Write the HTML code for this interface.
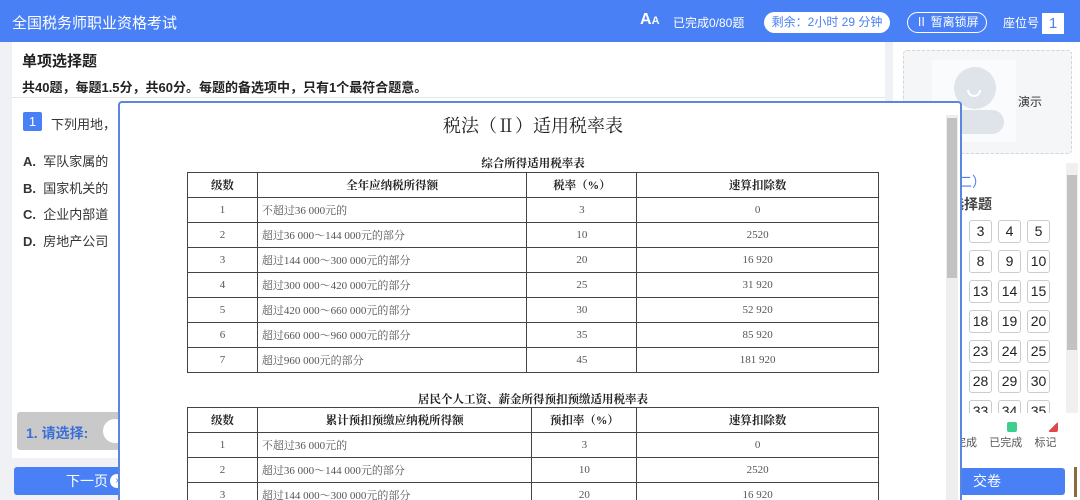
<!DOCTYPE html>
<html style="overflow:hidden;width:1080px;height:500px"><head><meta charset="utf-8">
<style>
*{margin:0;padding:0;box-sizing:border-box}
body{width:1080px;height:500px;overflow:hidden;background:#f0f1f4;font-family:"Liberation Sans","Noto Sans CJK SC",sans-serif;position:relative;color:#333}
.a{position:absolute}
.hdr{left:0;top:0;width:1080px;height:42px;background:#4a80f5;color:#fff}
table{border-collapse:collapse;position:absolute;font-family:"Liberation Serif","Noto Serif CJK SC",serif;font-size:11px;color:#555}
td{border:1px solid #444;height:25px;text-align:center;padding:0}
td.l{text-align:left;padding-left:4px}
tr.h td{color:#222;font-weight:bold;font-size:11.5px}
.c{position:absolute;width:23px;height:23px;border:1px solid #ccc;border-radius:3px;background:#fff;font-size:14px;text-align:center;line-height:21px;color:#222}
</style></head><body>
<div class="a hdr">
 <div class="a" style="left:12px;top:12px;font-size:15px">全国税务师职业资格考试</div>
 <div class="a" style="left:640px;top:11px;font-size:16px;font-weight:bold">A<span style="font-size:11px">A</span></div>
 <div class="a" style="left:673px;top:14px;font-size:12px">已完成0/80题</div>
 <div class="a" style="left:764px;top:12px;width:126px;height:21px;background:#fff;border-radius:11px;color:#4a80f5;font-size:12px;text-align:center;line-height:21px">剩余：2小时 29 分钟</div>
 <div class="a" style="left:907px;top:12px;width:80px;height:21px;border:1px solid #fff;border-radius:11px;font-size:12px;text-align:center;line-height:19px">Ⅱ 暂离锁屏</div>
 <div class="a" style="left:1003px;top:14px;font-size:12px">座位号</div>
 <div class="a" style="left:1042px;top:13px;width:22px;height:21px;background:#fff;color:#4a80f5;font-size:15px;text-align:center;line-height:21px">1</div>
</div>
<div class="a" style="left:12px;top:42px;width:873px;height:416px;background:#fff"></div>
<div class="a" style="left:12px;top:97px;width:873px;height:1px;background:#e5e5e5"></div>
<div class="a" style="left:22px;top:50px;font-size:15px;font-weight:bold;color:#222">单项选择题</div>
<div class="a" style="left:22px;top:77px;font-size:13px;font-weight:bold;color:#222">共40题，每题1.5分，共60分。每题的备选项中，只有1个最符合题意。</div>
<div class="a" style="left:23px;top:112px;width:19px;height:19px;background:#4a80f5;color:#fff;font-size:13px;text-align:center;line-height:19px;border-radius:2px">1</div>
<div class="a" style="left:51px;top:114px;font-size:13px">下列用地，</div>
<div class="a" style="left:23px;top:149px;font-size:13px;line-height:26.5px"><b>A.</b>&nbsp; 军队家属的<br><b>B.</b>&nbsp; 国家机关的<br><b>C.</b>&nbsp; 企业内部道<br><b>D.</b>&nbsp; 房地产公司</div>
<div class="a" style="left:17px;top:412px;width:110px;height:38px;background:#c9c9c9;border-radius:3px"></div>
<div class="a" style="left:26px;top:423px;font-size:14px;font-weight:bold;color:#3a6fd8">1. 请选择:</div>
<div class="a" style="left:103px;top:419px;width:24px;height:24px;border-radius:12px;background:#fff"></div>
<div class="a" style="left:14px;top:467px;width:111px;height:28px;background:#4a80f5;border-radius:3px;color:#fff;font-size:14px;line-height:28px;padding-left:52px">下一页</div>
<div class="a" style="left:110px;top:474px;width:14px;height:14px;border-radius:7px;background:#fff;color:#4a80f5;font-size:10px;text-align:center;line-height:14px">›</div>
<div class="a" style="left:893px;top:42px;width:187px;height:458px;background:#fff"></div>
<div class="a" style="left:903px;top:50px;width:169px;height:104px;background:#f5f6f8;border:1px dashed #d5d5d5;border-radius:4px"></div>
<div class="a" style="left:932px;top:60px;width:84px;height:82px;background:#fafbfc"></div>
<div class="a" style="left:954px;top:67px;width:42px;height:42px;border-radius:21px;background:#dfe3ea"></div>
<div class="a" style="left:967px;top:90px;width:14px;height:7px;border:2px solid #fff;border-top:none;border-radius:0 0 7px 7px"></div>
<div class="a" style="left:940px;top:110px;width:64px;height:24px;border-radius:12px;background:#dfe3ea"></div>
<div class="a" style="left:1018px;top:93px;font-size:12px">演示</div>
<div class="a" style="left:958px;top:172px;font-size:14px;color:#4a80f5">二）</div>
<div class="a" style="left:950px;top:194px;font-size:14px;font-weight:bold;color:#444">选择题</div>
<div class="a" style="left:903px;top:213px;width:160px;height:200px;overflow:hidden">
<div class="c" style="left:66px;top:7px">3</div><div class="c" style="left:95px;top:7px">4</div><div class="c" style="left:124px;top:7px">5</div>
<div class="c" style="left:66px;top:37px">8</div><div class="c" style="left:95px;top:37px">9</div><div class="c" style="left:124px;top:37px">10</div>
<div class="c" style="left:66px;top:67px">13</div><div class="c" style="left:95px;top:67px">14</div><div class="c" style="left:124px;top:67px">15</div>
<div class="c" style="left:66px;top:97px">18</div><div class="c" style="left:95px;top:97px">19</div><div class="c" style="left:124px;top:97px">20</div>
<div class="c" style="left:66px;top:127px">23</div><div class="c" style="left:95px;top:127px">24</div><div class="c" style="left:124px;top:127px">25</div>
<div class="c" style="left:66px;top:157px">28</div><div class="c" style="left:95px;top:157px">29</div><div class="c" style="left:124px;top:157px">30</div>
<div class="c" style="left:66px;top:187px">33</div><div class="c" style="left:95px;top:187px">34</div><div class="c" style="left:124px;top:187px">35</div>
</div>
<div class="a" style="left:1066px;top:163px;width:12px;height:250px;background:#f0f0f0"></div>
<div class="a" style="left:1067px;top:175px;width:10px;height:175px;background:#c2c2c2"></div>
<div class="a" style="left:1007px;top:422px;width:10px;height:10px;border-radius:2px;background:#3ecf8e"></div>
<div class="a" style="left:1048px;top:422px;width:10px;height:10px;border-radius:2px;background:linear-gradient(135deg,#fff 50%,#e04848 50%)"></div>
<div class="a" style="left:955px;top:434px;font-size:11px;color:#555">完成 &nbsp; &nbsp;已完成 &nbsp; &nbsp;标记</div>
<div class="a" style="left:960px;top:468px;width:105px;height:27px;background:#4a80f5;border-radius:3px;color:#fff;font-size:14px;line-height:27px;padding-left:13px">交卷</div>
<div class="a" style="left:1074px;top:467px;width:3px;height:30px;background:#8a6a40"></div>
<div class="a" style="left:118px;top:101px;width:844px;height:399px;background:#fff;border:2px solid #5b86e0;border-bottom:none;border-radius:4px 4px 0 0;overflow:hidden">
 <div class="a" style="left:826px;top:12px;width:12px;height:400px;background:#eee"></div>
 <div class="a" style="left:827px;top:15px;width:10px;height:160px;background:#c2c2c2"></div>
 <div class="a" style="left:0;top:9px;width:826px;text-align:center;font-family:'Liberation Serif','Noto Serif CJK SC',serif;font-size:18px;color:#222">税法（Ⅱ）适用税率表</div>
 <div class="a" style="left:0;top:52px;width:826px;text-align:center;font-family:'Liberation Serif','Noto Serif CJK SC',serif;font-size:11.5px;font-weight:bold;color:#222">综合所得适用税率表</div>
 <div class="a" style="left:0;top:288px;width:826px;text-align:center;font-family:'Liberation Serif','Noto Serif CJK SC',serif;font-size:11.5px;font-weight:bold;color:#222">居民个人工资、薪金所得预扣预缴适用税率表</div>
</div>
<table style="left:187px;top:172px;width:692px">
<colgroup><col style="width:70px"><col style="width:270px"><col style="width:110px"><col style="width:242px"></colgroup>
<tr class="h"><td>级数</td><td>全年应纳税所得额</td><td>税率（%）</td><td>速算扣除数</td></tr>
<tr><td>1</td><td class="l">不超过36 000元的</td><td>3</td><td>0</td></tr>
<tr><td>2</td><td class="l">超过36 000～144 000元的部分</td><td>10</td><td>2520</td></tr>
<tr><td>3</td><td class="l">超过144 000～300 000元的部分</td><td>20</td><td>16 920</td></tr>
<tr><td>4</td><td class="l">超过300 000～420 000元的部分</td><td>25</td><td>31 920</td></tr>
<tr><td>5</td><td class="l">超过420 000～660 000元的部分</td><td>30</td><td>52 920</td></tr>
<tr><td>6</td><td class="l">超过660 000～960 000元的部分</td><td>35</td><td>85 920</td></tr>
<tr><td>7</td><td class="l">超过960 000元的部分</td><td>45</td><td>181 920</td></tr>
</table>
<div class="a" style="left:187px;top:407px;width:692px;height:93px;overflow:hidden">
<table style="left:0;top:0;width:692px">
<colgroup><col style="width:70px"><col style="width:275px"><col style="width:105px"><col style="width:242px"></colgroup>
<tr class="h"><td>级数</td><td>累计预扣预缴应纳税所得额</td><td>预扣率（%）</td><td>速算扣除数</td></tr>
<tr><td>1</td><td class="l">不超过36 000元的</td><td>3</td><td>0</td></tr>
<tr><td>2</td><td class="l">超过36 000～144 000元的部分</td><td>10</td><td>2520</td></tr>
<tr><td>3</td><td class="l">超过144 000～300 000元的部分</td><td>20</td><td>16 920</td></tr>
</table>
</div>
</body></html>
